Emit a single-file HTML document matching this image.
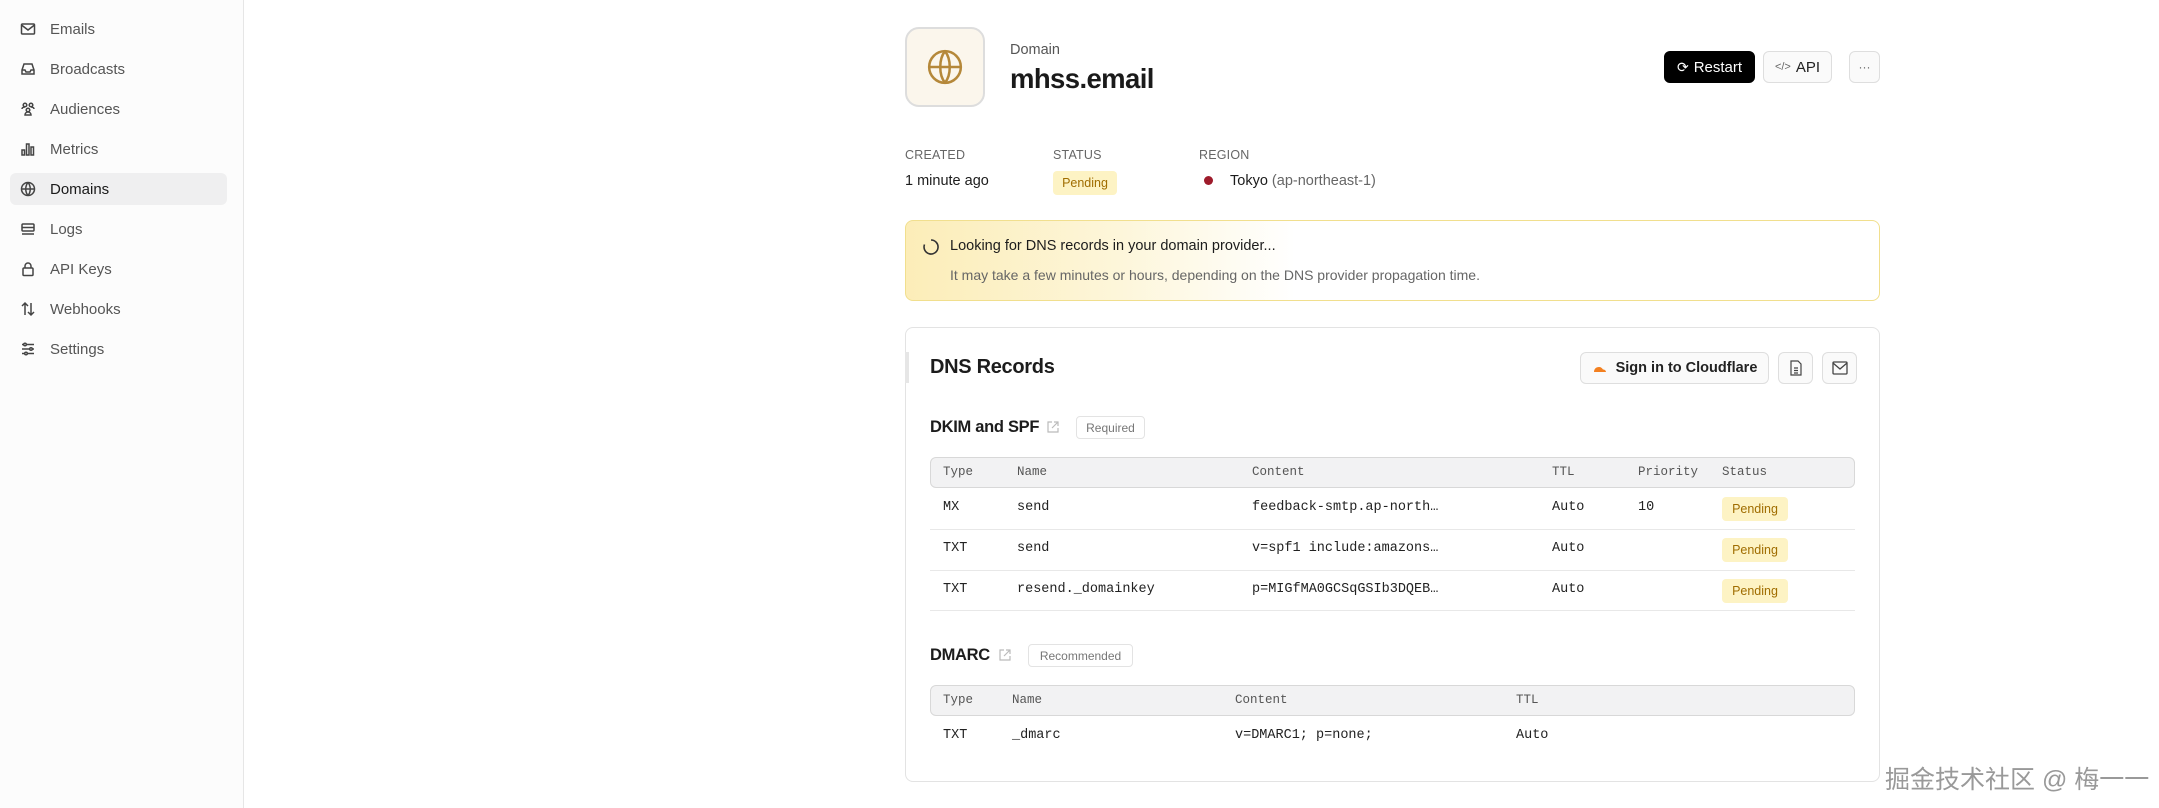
<!DOCTYPE html>
<html><head><meta charset="utf-8"><style>
*{box-sizing:border-box;margin:0;padding:0}
body{width:2159px;height:808px;background:#fff;font-family:"Liberation Sans",sans-serif;color:#1c1c1c;position:relative;overflow:hidden}
.abs{position:absolute}
.side{position:absolute;left:0;top:0;width:244px;height:808px;background:#fcfcfc;border-right:1px solid #e6e6e6}
.nav{position:absolute;left:10px;width:217px;height:32px;border-radius:6px;font-size:15px;color:#555;display:flex;align-items:center;padding-left:10px}
.nav svg{width:16px;height:16px;margin-right:14px;stroke:#444;fill:none;stroke-width:1.5}
.nav.act{background:#efeff0;color:#1a1a1a}
.mono{font-family:"Liberation Mono",monospace}
.lbl{font-size:12.5px;color:#666;letter-spacing:.2px}
.badge{position:absolute;background:#fdf3c4;color:#a06d00;font-size:12.5px;border-radius:4px;display:flex;align-items:center;justify-content:center}
.btn{position:absolute;border:1px solid #dedede;border-radius:6px;background:#fafafa;display:flex;align-items:center;justify-content:center;font-size:15px}
.th{position:absolute;font-size:12.5px;color:#555}
.td{position:absolute;font-size:13.5px;color:#222}
.hr{position:absolute;left:930px;width:925px;height:1px;background:#e8e8e8}
</style></head><body>
<div class="side">
<div class="nav" style="top:13px"><svg viewBox="0 0 16 16"><rect x="1.5" y="3" width="13" height="10" rx="1"/><path d="M1.5 4l6.5 5 6.5-5"/></svg>Emails</div>
<div class="nav" style="top:53px"><svg viewBox="0 0 16 16"><path d="M2 9l2-6h8l2 6v4H2z M2 9h3l1 2h4l1-2h3"/></svg>Broadcasts</div>
<div class="nav" style="top:93px"><svg viewBox="0 0 16 16"><circle cx="5" cy="4" r="1.8"/><circle cx="11" cy="4" r="1.8"/><circle cx="8" cy="9" r="1.8"/><path d="M2 8c0-1 1-2 3-2M14 8c0-1-1-2-3-2M5 14c0-2 1.5-3 3-3s3 1 3 3z"/></svg>Audiences</div>
<div class="nav" style="top:133px"><svg viewBox="0 0 16 16"><rect x="2" y="9" width="2.5" height="5"/><rect x="6.5" y="3" width="2.5" height="11"/><rect x="11" y="6" width="2.5" height="8"/></svg>Metrics</div>
<div class="nav act" style="top:173px"><svg viewBox="0 0 16 16"><circle cx="8" cy="8" r="6.5"/><path d="M1.5 8h13M8 1.5c-3 3.5-3 9.5 0 13M8 1.5c3 3.5 3 9.5 0 13"/></svg>Domains</div>
<div class="nav" style="top:213px"><svg viewBox="0 0 16 16"><rect x="2" y="3" width="12" height="7" rx="1"/><path d="M2 6.5h12M2 13h12"/></svg>Logs</div>
<div class="nav" style="top:253px"><svg viewBox="0 0 16 16"><rect x="3" y="7" width="10" height="7.5" rx="1"/><path d="M5 7V5a3 3 0 016 0v2"/></svg>API Keys</div>
<div class="nav" style="top:293px"><svg viewBox="0 0 16 16"><path d="M5 14V2M2 5l3-3 3 3M11 2v12M8 11l3 3 3-3"/></svg>Webhooks</div>
<div class="nav" style="top:333px"><svg viewBox="0 0 16 16"><path d="M2 3.5h12M2 8h12M2 12.5h12"/><circle cx="5" cy="3.5" r="1.3" fill="#fff"/><circle cx="11" cy="8" r="1.3" fill="#fff"/><circle cx="6" cy="12.5" r="1.3" fill="#fff"/></svg>Settings</div>
</div>

<div class="abs" style="left:905px;top:27px;width:80px;height:80px;border:2px solid #ddd;border-radius:14px;background:#fbf6ec;display:flex;align-items:center;justify-content:center">
<svg width="38" height="38" viewBox="0 0 24 24" fill="none" stroke="#b5883a" stroke-width="1.6"><circle cx="12" cy="12" r="10"/><path d="M2 12h20M12 2c-4 5-4 15 0 20M12 2c4 5 4 15 0 20"/></svg></div>
<div class="abs" style="left:1010px;top:42px;font-size:14.5px;color:#555">Domain</div>
<div class="abs" style="left:1010px;top:63px;font-size:27.5px;font-weight:bold;color:#1a1a1a;letter-spacing:-.6px">mhss.email</div>

<div class="btn" style="left:1664px;top:51px;width:91px;height:32px;background:#000;border-color:#000;color:#fff"><span style="font-size:14px;margin-right:5px">⟳</span>Restart</div>
<div class="btn" style="left:1763px;top:51px;width:69px;height:32px;color:#222"><span style="font-size:11px;color:#666;margin-right:5px">&lt;/&gt;</span>API</div>
<div class="btn" style="left:1849px;top:51px;width:31px;height:32px;color:#666;font-size:12px">···</div>

<div class="abs lbl" style="left:905px;top:148px">CREATED</div>
<div class="abs lbl" style="left:1053px;top:148px">STATUS</div>
<div class="abs lbl" style="left:1199px;top:148px">REGION</div>
<div class="abs" style="left:905px;top:173px;font-size:14.5px">1 minute ago</div>
<div class="badge" style="left:1053px;top:171px;width:64px;height:24px">Pending</div>
<div class="abs" style="left:1204px;top:176px;width:9px;height:9px;border-radius:50%;background:#9e1b2b"></div>
<div class="abs" style="left:1230px;top:173px;font-size:14.5px">Tokyo <span style="color:#666">(ap-northeast-1)</span></div>

<div class="abs" style="left:905px;top:220px;width:975px;height:81px;border:1px solid #f1df8e;border-radius:8px;background:linear-gradient(90deg,#fcedb8 0%,#fdf6da 22%,#fff 40%)"></div>
<svg class="abs" style="left:922px;top:238px" width="18" height="18" viewBox="0 0 18 18" fill="none" stroke="#333" stroke-width="1.6"><path d="M9 2a7 7 0 11-6.5 4.5"/></svg>
<div class="abs" style="left:950px;top:238px;font-size:14.5px">Looking for DNS records in your domain provider...</div>
<div class="abs" style="left:950px;top:267px;font-size:14px;color:#666">It may take a few minutes or hours, depending on the DNS provider propagation time.</div>

<div class="abs" style="left:905px;top:327px;width:975px;height:455px;border:1px solid #e3e3e3;border-radius:8px"></div>
<div class="abs" style="left:905px;top:352px;width:4px;height:31px;background:#e6e6e6"></div>
<div class="abs" style="left:930px;top:356px;font-size:20px;font-weight:bold;letter-spacing:-.3px">DNS Records</div>
<div class="btn" style="left:1580px;top:352px;width:189px;height:32px;font-size:14.5px;font-weight:bold;color:#222"><svg width="16" height="10" viewBox="0 0 16 10" style="margin-right:8px"><path d="M2 9c0-3 2-5 5-5 2 0 3 1 4 2.5 1.5 0 3 1 3 2.5z" fill="#f38020"/></svg>Sign in to Cloudflare</div>
<div class="btn" style="left:1778px;top:352px;width:35px;height:32px"><svg width="14" height="16" viewBox="0 0 14 16" fill="none" stroke="#444" stroke-width="1.2"><path d="M2 1h7l3 3v11H2z M5 8h4M5 10.5h4M5 13h4"/></svg></div>
<div class="btn" style="left:1822px;top:352px;width:35px;height:32px"><svg width="16" height="14" viewBox="0 0 16 14" fill="none" stroke="#444" stroke-width="1.3"><rect x="1" y="1" width="14" height="12" rx="1"/><path d="M1 2l7 6 7-6"/></svg></div>

<div class="abs" style="left:930px;top:418px;font-size:16.5px;font-weight:bold;letter-spacing:-.3px">DKIM and SPF</div>
<svg class="abs" style="left:1046px;top:420px" width="14" height="14" viewBox="0 0 14 14" fill="none" stroke="#bbb" stroke-width="1.2"><path d="M6 2H2v10h10V8M8 2h4v4M12 2L6 8"/></svg>
<div class="abs" style="left:1076px;top:416px;width:69px;height:23px;border:1px solid #e3e3e3;border-radius:4px;font-size:12px;color:#777;display:flex;align-items:center;justify-content:center">Required</div>

<div class="abs" style="left:930px;top:457px;width:925px;height:31px;background:#f2f2f3;border:1px solid #d8d8d8;border-radius:6px"></div>
<div class="th mono" style="left:943px;top:465px">Type</div>
<div class="th mono" style="left:1017px;top:465px">Name</div>
<div class="th mono" style="left:1252px;top:465px">Content</div>
<div class="th mono" style="left:1552px;top:465px">TTL</div>
<div class="th mono" style="left:1638px;top:465px">Priority</div>
<div class="th mono" style="left:1722px;top:465px">Status</div>

<div class="td mono" style="left:943px;top:500px">MX</div>
<div class="td mono" style="left:1017px;top:500px">send</div>
<div class="td mono" style="left:1252px;top:500px">feedback-smtp.ap-north…</div>
<div class="td mono" style="left:1552px;top:500px">Auto</div>
<div class="td mono" style="left:1638px;top:500px">10</div>
<div class="badge" style="left:1722px;top:497px;width:66px;height:24px">Pending</div>
<div class="hr" style="top:529px"></div>
<div class="td mono" style="left:943px;top:541px">TXT</div>
<div class="td mono" style="left:1017px;top:541px">send</div>
<div class="td mono" style="left:1252px;top:541px">v=spf1 include:amazons…</div>
<div class="td mono" style="left:1552px;top:541px">Auto</div>
<div class="badge" style="left:1722px;top:538px;width:66px;height:24px">Pending</div>
<div class="hr" style="top:570px"></div>
<div class="td mono" style="left:943px;top:582px">TXT</div>
<div class="td mono" style="left:1017px;top:582px">resend._domainkey</div>
<div class="td mono" style="left:1252px;top:582px">p=MIGfMA0GCSqGSIb3DQEB…</div>
<div class="td mono" style="left:1552px;top:582px">Auto</div>
<div class="badge" style="left:1722px;top:579px;width:66px;height:24px">Pending</div>
<div class="hr" style="top:610px"></div>

<div class="abs" style="left:930px;top:646px;font-size:16.5px;font-weight:bold;letter-spacing:-.3px">DMARC</div>
<svg class="abs" style="left:998px;top:648px" width="14" height="14" viewBox="0 0 14 14" fill="none" stroke="#bbb" stroke-width="1.2"><path d="M6 2H2v10h10V8M8 2h4v4M12 2L6 8"/></svg>
<div class="abs" style="left:1028px;top:644px;width:105px;height:23px;border:1px solid #e3e3e3;border-radius:4px;font-size:12px;color:#777;display:flex;align-items:center;justify-content:center">Recommended</div>

<div class="abs" style="left:930px;top:685px;width:925px;height:31px;background:#f2f2f3;border:1px solid #d8d8d8;border-radius:6px"></div>
<div class="th mono" style="left:943px;top:693px">Type</div>
<div class="th mono" style="left:1012px;top:693px">Name</div>
<div class="th mono" style="left:1235px;top:693px">Content</div>
<div class="th mono" style="left:1516px;top:693px">TTL</div>
<div class="td mono" style="left:943px;top:728px">TXT</div>
<div class="td mono" style="left:1012px;top:728px">_dmarc</div>
<div class="td mono" style="left:1235px;top:728px">v=DMARC1; p=none;</div>
<div class="td mono" style="left:1516px;top:728px">Auto</div>

<div class="abs" style="left:1885px;top:760px;font-size:25px;color:#999;font-family:'Liberation Sans','Noto Sans CJK SC',sans-serif;text-shadow:0 0 2px #fff,0 0 2px #fff;white-space:nowrap">掘金技术社区 @ 梅一一</div>
</body></html>
